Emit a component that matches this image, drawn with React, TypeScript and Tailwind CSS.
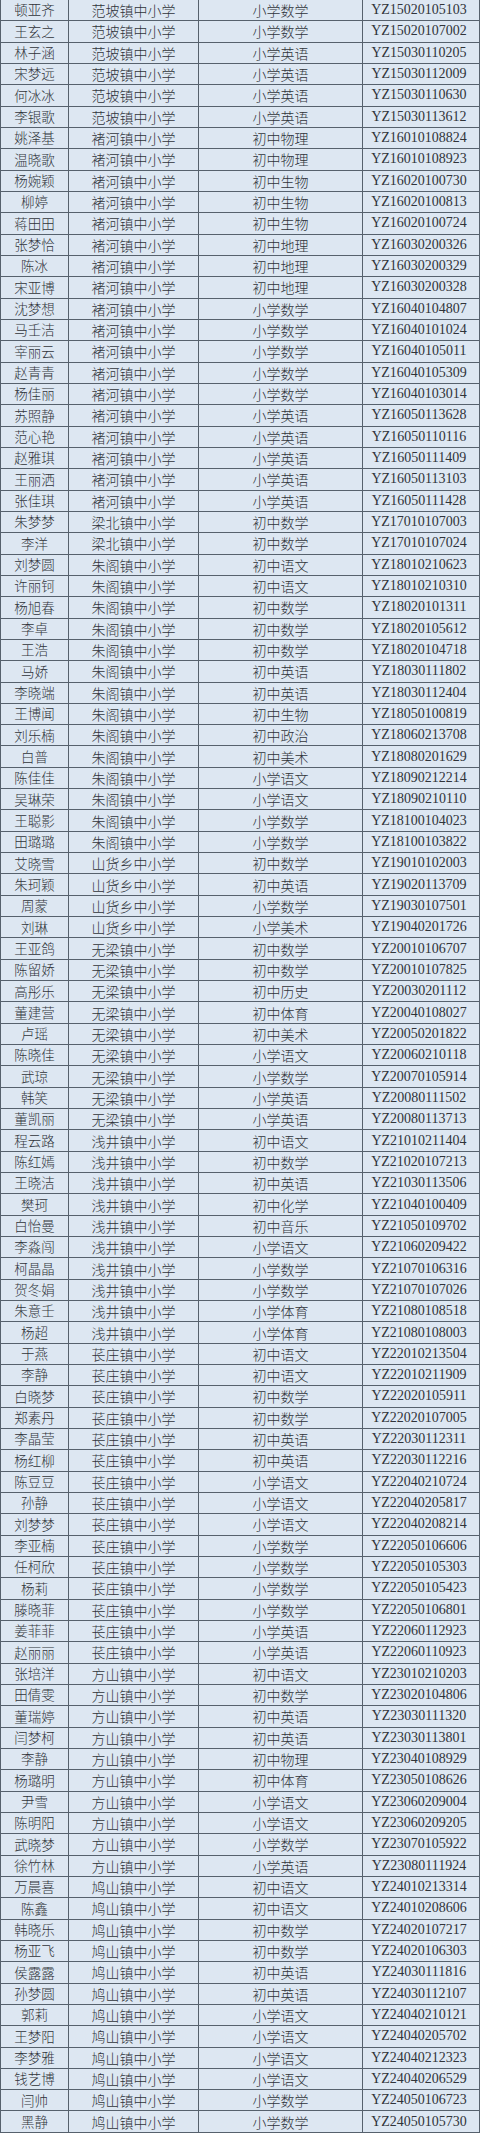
const rows: [string, string, string, string][] = [
  ["顿亚齐", "范坡镇中小学", "小学数学", "YZ15020105103"],
  ["王玄之", "范坡镇中小学", "小学数学", "YZ15020107002"],
  ["林子涵", "范坡镇中小学", "小学英语", "YZ15030110205"],
  ["宋梦远", "范坡镇中小学", "小学英语", "YZ15030112009"],
  ["何冰冰", "范坡镇中小学", "小学英语", "YZ15030110630"],
  ["李银歌", "范坡镇中小学", "小学英语", "YZ15030113612"],
  ["姚泽基", "褚河镇中小学", "初中物理", "YZ16010108824"],
  ["温晓歌", "褚河镇中小学", "初中物理", "YZ16010108923"],
  ["杨婉颖", "褚河镇中小学", "初中生物", "YZ16020100730"],
  ["柳婷", "褚河镇中小学", "初中生物", "YZ16020100813"],
  ["蒋田田", "褚河镇中小学", "初中生物", "YZ16020100724"],
  ["张梦恰", "褚河镇中小学", "初中地理", "YZ16030200326"],
  ["陈冰", "褚河镇中小学", "初中地理", "YZ16030200329"],
  ["宋亚博", "褚河镇中小学", "初中地理", "YZ16030200328"],
  ["沈梦想", "褚河镇中小学", "小学数学", "YZ16040104807"],
  ["马壬洁", "褚河镇中小学", "小学数学", "YZ16040101024"],
  ["宰丽云", "褚河镇中小学", "小学数学", "YZ16040105011"],
  ["赵青青", "褚河镇中小学", "小学数学", "YZ16040105309"],
  ["杨佳丽", "褚河镇中小学", "小学数学", "YZ16040103014"],
  ["苏照静", "褚河镇中小学", "小学英语", "YZ16050113628"],
  ["范心艳", "褚河镇中小学", "小学英语", "YZ16050110116"],
  ["赵雅琪", "褚河镇中小学", "小学英语", "YZ16050111409"],
  ["王丽洒", "褚河镇中小学", "小学英语", "YZ16050113103"],
  ["张佳琪", "褚河镇中小学", "小学英语", "YZ16050111428"],
  ["朱梦梦", "梁北镇中小学", "初中数学", "YZ17010107003"],
  ["李洋", "梁北镇中小学", "初中数学", "YZ17010107024"],
  ["刘梦圆", "朱阁镇中小学", "初中语文", "YZ18010210623"],
  ["许丽钶", "朱阁镇中小学", "初中语文", "YZ18010210310"],
  ["杨旭春", "朱阁镇中小学", "初中数学", "YZ18020101311"],
  ["李卓", "朱阁镇中小学", "初中数学", "YZ18020105612"],
  ["王浩", "朱阁镇中小学", "初中数学", "YZ18020104718"],
  ["马娇", "朱阁镇中小学", "初中英语", "YZ18030111802"],
  ["李晓端", "朱阁镇中小学", "初中英语", "YZ18030112404"],
  ["王博闻", "朱阁镇中小学", "初中生物", "YZ18050100819"],
  ["刘乐楠", "朱阁镇中小学", "初中政治", "YZ18060213708"],
  ["白普", "朱阁镇中小学", "初中美术", "YZ18080201629"],
  ["陈佳佳", "朱阁镇中小学", "小学语文", "YZ18090212214"],
  ["吴琳荣", "朱阁镇中小学", "小学语文", "YZ18090210110"],
  ["王聪影", "朱阁镇中小学", "小学数学", "YZ18100104023"],
  ["田璐璐", "朱阁镇中小学", "小学数学", "YZ18100103822"],
  ["艾晓雪", "山货乡中小学", "初中数学", "YZ19010102003"],
  ["朱珂颖", "山货乡中小学", "初中英语", "YZ19020113709"],
  ["周蒙", "山货乡中小学", "小学数学", "YZ19030107501"],
  ["刘琳", "山货乡中小学", "小学美术", "YZ19040201726"],
  ["王亚鸽", "无梁镇中小学", "初中数学", "YZ20010106707"],
  ["陈留娇", "无梁镇中小学", "初中数学", "YZ20010107825"],
  ["高彤乐", "无梁镇中小学", "初中历史", "YZ20030201112"],
  ["董建营", "无梁镇中小学", "初中体育", "YZ20040108027"],
  ["卢瑶", "无梁镇中小学", "初中美术", "YZ20050201822"],
  ["陈晓佳", "无梁镇中小学", "小学语文", "YZ20060210118"],
  ["武琼", "无梁镇中小学", "小学数学", "YZ20070105914"],
  ["韩笑", "无梁镇中小学", "小学英语", "YZ20080111502"],
  ["董凯丽", "无梁镇中小学", "小学英语", "YZ20080113713"],
  ["程云路", "浅井镇中小学", "初中语文", "YZ21010211404"],
  ["陈红嫣", "浅井镇中小学", "初中数学", "YZ21020107213"],
  ["王晓洁", "浅井镇中小学", "初中英语", "YZ21030113506"],
  ["樊珂", "浅井镇中小学", "初中化学", "YZ21040100409"],
  ["白怡曼", "浅井镇中小学", "初中音乐", "YZ21050109702"],
  ["李淼闯", "浅井镇中小学", "小学语文", "YZ21060209422"],
  ["柯晶晶", "浅井镇中小学", "小学数学", "YZ21070106316"],
  ["贺冬娟", "浅井镇中小学", "小学数学", "YZ21070107026"],
  ["朱意壬", "浅井镇中小学", "小学体育", "YZ21080108518"],
  ["杨超", "浅井镇中小学", "小学体育", "YZ21080108003"],
  ["于燕", "苌庄镇中小学", "初中语文", "YZ22010213504"],
  ["李静", "苌庄镇中小学", "初中语文", "YZ22010211909"],
  ["白晓梦", "苌庄镇中小学", "初中数学", "YZ22020105911"],
  ["郑素丹", "苌庄镇中小学", "初中数学", "YZ22020107005"],
  ["李晶莹", "苌庄镇中小学", "初中英语", "YZ22030112311"],
  ["杨红柳", "苌庄镇中小学", "初中英语", "YZ22030112216"],
  ["陈豆豆", "苌庄镇中小学", "小学语文", "YZ22040210724"],
  ["孙静", "苌庄镇中小学", "小学语文", "YZ22040205817"],
  ["刘梦梦", "苌庄镇中小学", "小学语文", "YZ22040208214"],
  ["李亚楠", "苌庄镇中小学", "小学数学", "YZ22050106606"],
  ["任柯欣", "苌庄镇中小学", "小学数学", "YZ22050105303"],
  ["杨莉", "苌庄镇中小学", "小学数学", "YZ22050105423"],
  ["滕晓菲", "苌庄镇中小学", "小学数学", "YZ22050106801"],
  ["姜菲菲", "苌庄镇中小学", "小学英语", "YZ22060112923"],
  ["赵丽丽", "苌庄镇中小学", "小学英语", "YZ22060110923"],
  ["张培洋", "方山镇中小学", "初中语文", "YZ23010210203"],
  ["田倩雯", "方山镇中小学", "初中数学", "YZ23020104806"],
  ["董瑞婷", "方山镇中小学", "初中英语", "YZ23030111320"],
  ["闫梦柯", "方山镇中小学", "初中英语", "YZ23030113801"],
  ["李静", "方山镇中小学", "初中物理", "YZ23040108929"],
  ["杨璐明", "方山镇中小学", "初中体育", "YZ23050108626"],
  ["尹雪", "方山镇中小学", "小学语文", "YZ23060209004"],
  ["陈明阳", "方山镇中小学", "小学语文", "YZ23060209205"],
  ["武晓梦", "方山镇中小学", "小学数学", "YZ23070105922"],
  ["徐竹林", "方山镇中小学", "小学英语", "YZ23080111924"],
  ["万晨喜", "鸠山镇中小学", "初中语文", "YZ24010213314"],
  ["陈鑫", "鸠山镇中小学", "初中语文", "YZ24010208606"],
  ["韩晓乐", "鸠山镇中小学", "初中数学", "YZ24020107217"],
  ["杨亚飞", "鸠山镇中小学", "初中数学", "YZ24020106303"],
  ["侯露露", "鸠山镇中小学", "初中英语", "YZ24030111816"],
  ["孙梦圆", "鸠山镇中小学", "初中英语", "YZ24030112107"],
  ["郭莉", "鸠山镇中小学", "小学语文", "YZ24040210121"],
  ["王梦阳", "鸠山镇中小学", "小学语文", "YZ24040205702"],
  ["李梦雅", "鸠山镇中小学", "小学语文", "YZ24040212323"],
  ["钱艺博", "鸠山镇中小学", "小学语文", "YZ24040206529"],
  ["闫帅", "鸠山镇中小学", "小学数学", "YZ24050106723"],
  ["黑静", "鸠山镇中小学", "小学数学", "YZ24050105730"],
];

const cjk = "font-['Noto_Sans_CJK_SC',sans-serif] font-light";

export default function App() {
  return (
    <div className="w-[480px] bg-[#dde7f2] text-[#30343a]">
      {rows.map(([name, school, subject, id], i) => (
        <div
          key={i}
          className="grid h-[21.33px] grid-cols-[69px_130px_164px_117px] border-b border-[#56616d]"
        >
          <div className={`flex items-center justify-center border-x border-[#56616d] text-[13.5px] leading-none ${cjk}`}>
            {name}
          </div>
          <div className={`flex items-center justify-center border-r border-[#56616d] text-[14px] leading-none ${cjk}`}>
            {school}
          </div>
          <div className={`flex items-center justify-center border-r border-[#56616d] text-[14px] leading-none ${cjk}`}>
            {subject}
          </div>
          <div className="flex items-center justify-center border-r border-[#56616d] pr-[4px] font-['Liberation_Serif',serif] text-[14px] leading-none">
            {id}
          </div>
        </div>
      ))}
    </div>
  );
}
